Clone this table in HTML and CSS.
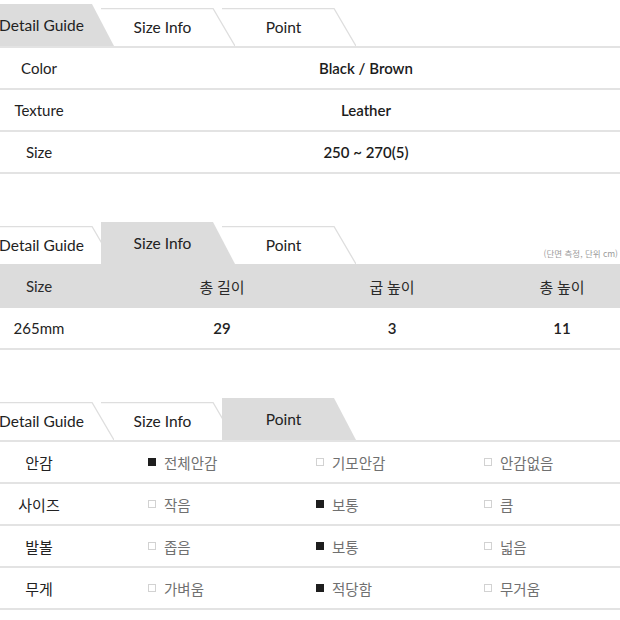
FILE: index.html
```html
<!DOCTYPE html>
<html lang="ko">
<head>
<meta charset="utf-8">
<title>Detail Guide</title>
<link rel="stylesheet" href="styles.css">
</head>
<body>
<div class="page">

  <section class="block">
    <div class="tabs">
      <div class="tab t1 active"><svg viewBox="0 0 134 38" preserveAspectRatio="none"><path class="fill" d="M0 0H112L134 38H0Z"/><path class="edge" d="M0 0.5H112L134 38"/></svg><span>Detail Guide</span></div>
      <div class="tab t2"><svg viewBox="0 0 134 38" preserveAspectRatio="none"><path class="fill" d="M0 0H112L134 38H0Z"/><path class="edge" d="M0 0.5H112L134 38"/></svg><span>Size Info</span></div>
      <div class="tab t3"><svg viewBox="0 0 134 38" preserveAspectRatio="none"><path class="fill" d="M0 0H112L134 38H0Z"/><path class="edge" d="M0 0.5H112L134 38"/></svg><span>Point</span></div>
    </div>
    <div class="spec">
      <div class="row"><div class="k">Color</div><div class="v">Black / Brown</div></div>
      <div class="row"><div class="k">Texture</div><div class="v">Leather</div></div>
      <div class="row"><div class="k">Size</div><div class="v">250 ~ 270(5)</div></div>
    </div>
  </section>

  <section class="block gap">
    <div class="tabs">
      <div class="tab t1"><svg viewBox="0 0 134 38" preserveAspectRatio="none"><path class="fill" d="M0 0H112L134 38H0Z"/><path class="edge" d="M0 0.5H112L134 38"/></svg><span>Detail Guide</span></div>
      <div class="tab t2 active"><svg viewBox="0 0 134 38" preserveAspectRatio="none"><path class="fill" d="M0 0H112L134 38H0Z"/><path class="edge" d="M0 0.5H112L134 38"/></svg><span>Size Info</span></div>
      <div class="tab t3"><svg viewBox="0 0 134 38" preserveAspectRatio="none"><path class="fill" d="M0 0H112L134 38H0Z"/><path class="edge" d="M0 0.5H112L134 38"/></svg><span>Point</span></div>
      <div class="note">(단면 측정, 단위 cm)</div>
    </div>
    <div class="sizes">
      <div class="srow head"><div class="c1">Size</div><div>총 길이</div><div>굽 높이</div><div>총 높이</div></div>
      <div class="srow data"><div class="c1">265mm</div><div class="n">29</div><div class="n">3</div><div class="n">11</div></div>
    </div>
  </section>

  <section class="block gap">
    <div class="tabs">
      <div class="tab t1"><svg viewBox="0 0 134 38" preserveAspectRatio="none"><path class="fill" d="M0 0H112L134 38H0Z"/><path class="edge" d="M0 0.5H112L134 38"/></svg><span>Detail Guide</span></div>
      <div class="tab t2"><svg viewBox="0 0 134 38" preserveAspectRatio="none"><path class="fill" d="M0 0H112L134 38H0Z"/><path class="edge" d="M0 0.5H112L134 38"/></svg><span>Size Info</span></div>
      <div class="tab t3 active"><svg viewBox="0 0 134 38" preserveAspectRatio="none"><path class="fill" d="M0 0H112L134 38H0Z"/><path class="edge" d="M0 0.5H112L134 38"/></svg><span>Point</span></div>
    </div>
    <div class="points">
      <div class="prow"><div class="c1">안감</div><div class="opt"><i class="box on"></i>전체안감</div><div class="opt"><i class="box"></i>기모안감</div><div class="opt"><i class="box"></i>안감없음</div></div>
      <div class="prow"><div class="c1">사이즈</div><div class="opt"><i class="box"></i>작음</div><div class="opt"><i class="box on"></i>보통</div><div class="opt"><i class="box"></i>큼</div></div>
      <div class="prow"><div class="c1">발볼</div><div class="opt"><i class="box"></i>좁음</div><div class="opt"><i class="box on"></i>보통</div><div class="opt"><i class="box"></i>넓음</div></div>
      <div class="prow"><div class="c1">무게</div><div class="opt"><i class="box"></i>가벼움</div><div class="opt"><i class="box on"></i>적당함</div><div class="opt"><i class="box"></i>무거움</div></div>
    </div>
  </section>

</div>
</body>
</html>
```
FILE: styles.css
```css
html, body {
  margin: 0;
  padding: 0;
  background: #fff;
  overflow: hidden;
}

body {
  font-family: Lato, "Noto Sans CJK KR", sans-serif;
  color: #222;
  font-size: 15px;
}

.page {
  width: 660px;
  margin-left: -20px;
  padding-top: 4px;
}

.gap {
  margin-top: 48px;
}

/* tabs */
.tabs {
  display: flex;
  align-items: flex-end;
  height: 42px;
}

.tab {
  position: relative;
  box-sizing: border-box;
  width: 134px;
  height: 38px;
  margin-right: -13px;
  padding-right: 11px;
  display: flex;
  align-items: center;
  justify-content: center;
  font-size: 15.5px;
  color: #222;
}

.tab.t1 { z-index: 3; }
.tab.t2 { z-index: 2; }
.tab.t3 { z-index: 1; }
.tab.active {
  height: 42px;
  z-index: 5;
}

.tab svg {
  position: absolute;
  left: 0;
  top: 0;
  width: 100%;
  height: 100%;
  z-index: -1;
}

.tab .fill { fill: #fff; }
.tab .edge {
  fill: none;
  stroke: #dedede;
  stroke-width: 1.3;
  vector-effect: non-scaling-stroke;
}
.tab.active .fill { fill: #dcdcdc; }
.tab.active .edge { display: none; }

.note {
  margin-left: auto;
  margin-right: 22px;
  margin-bottom: 5px;
  font-size: 8.5px;
  color: #9a9a9a;
  font-family: "Noto Sans CJK KR", sans-serif;
}

/* detail guide */
.spec {
  border-top: 2px solid #e3e3e3;
}

.spec .row {
  display: grid;
  grid-template-columns: 118px 536px;
  height: 40px;
  align-items: center;
  border-bottom: 2px solid #e3e3e3;
}

.spec .k {
  text-align: center;
  color: #222;
}

.spec .v {
  text-align: center;
  font-weight: 600;
  color: #1c1c1c;
}

/* size info */
.srow {
  display: grid;
  grid-template-columns: 157px 170px 170px 170px;
  align-items: center;
  text-align: center;
}

.srow .c1 {
  padding-right: 39px;
}

.srow.head {
  height: 44px;
  background: #dcdcdc;
  color: #2a2a2a;
}

.srow.data {
  height: 40px;
  border-bottom: 2px solid #e3e3e3;
}

.srow .n {
  font-weight: 600;
}

/* point */
.points {
  border-top: 2px solid #e3e3e3;
}

.prow {
  display: grid;
  grid-template-columns: 157px 168px 168px 168px;
  height: 40px;
  align-items: center;
  border-bottom: 2px solid #e3e3e3;
}

.prow .c1 {
  padding-right: 39px;
  text-align: center;
  color: #222;
  font-family: "Noto Sans CJK KR", sans-serif;
  font-size: 15px;
}

.opt {
  display: flex;
  align-items: center;
  padding-left: 11px;
  font-family: "Noto Sans CJK KR", sans-serif;
  font-size: 14.5px;
  color: #707070;
}

.box {
  box-sizing: border-box;
  width: 8px;
  height: 8px;
  margin-right: 8px;
  border: 1px solid #d2d2d2;
  background: #fff;
}

.box.on {
  border-color: #1e1e1e;
  background: #1e1e1e;
}
```
